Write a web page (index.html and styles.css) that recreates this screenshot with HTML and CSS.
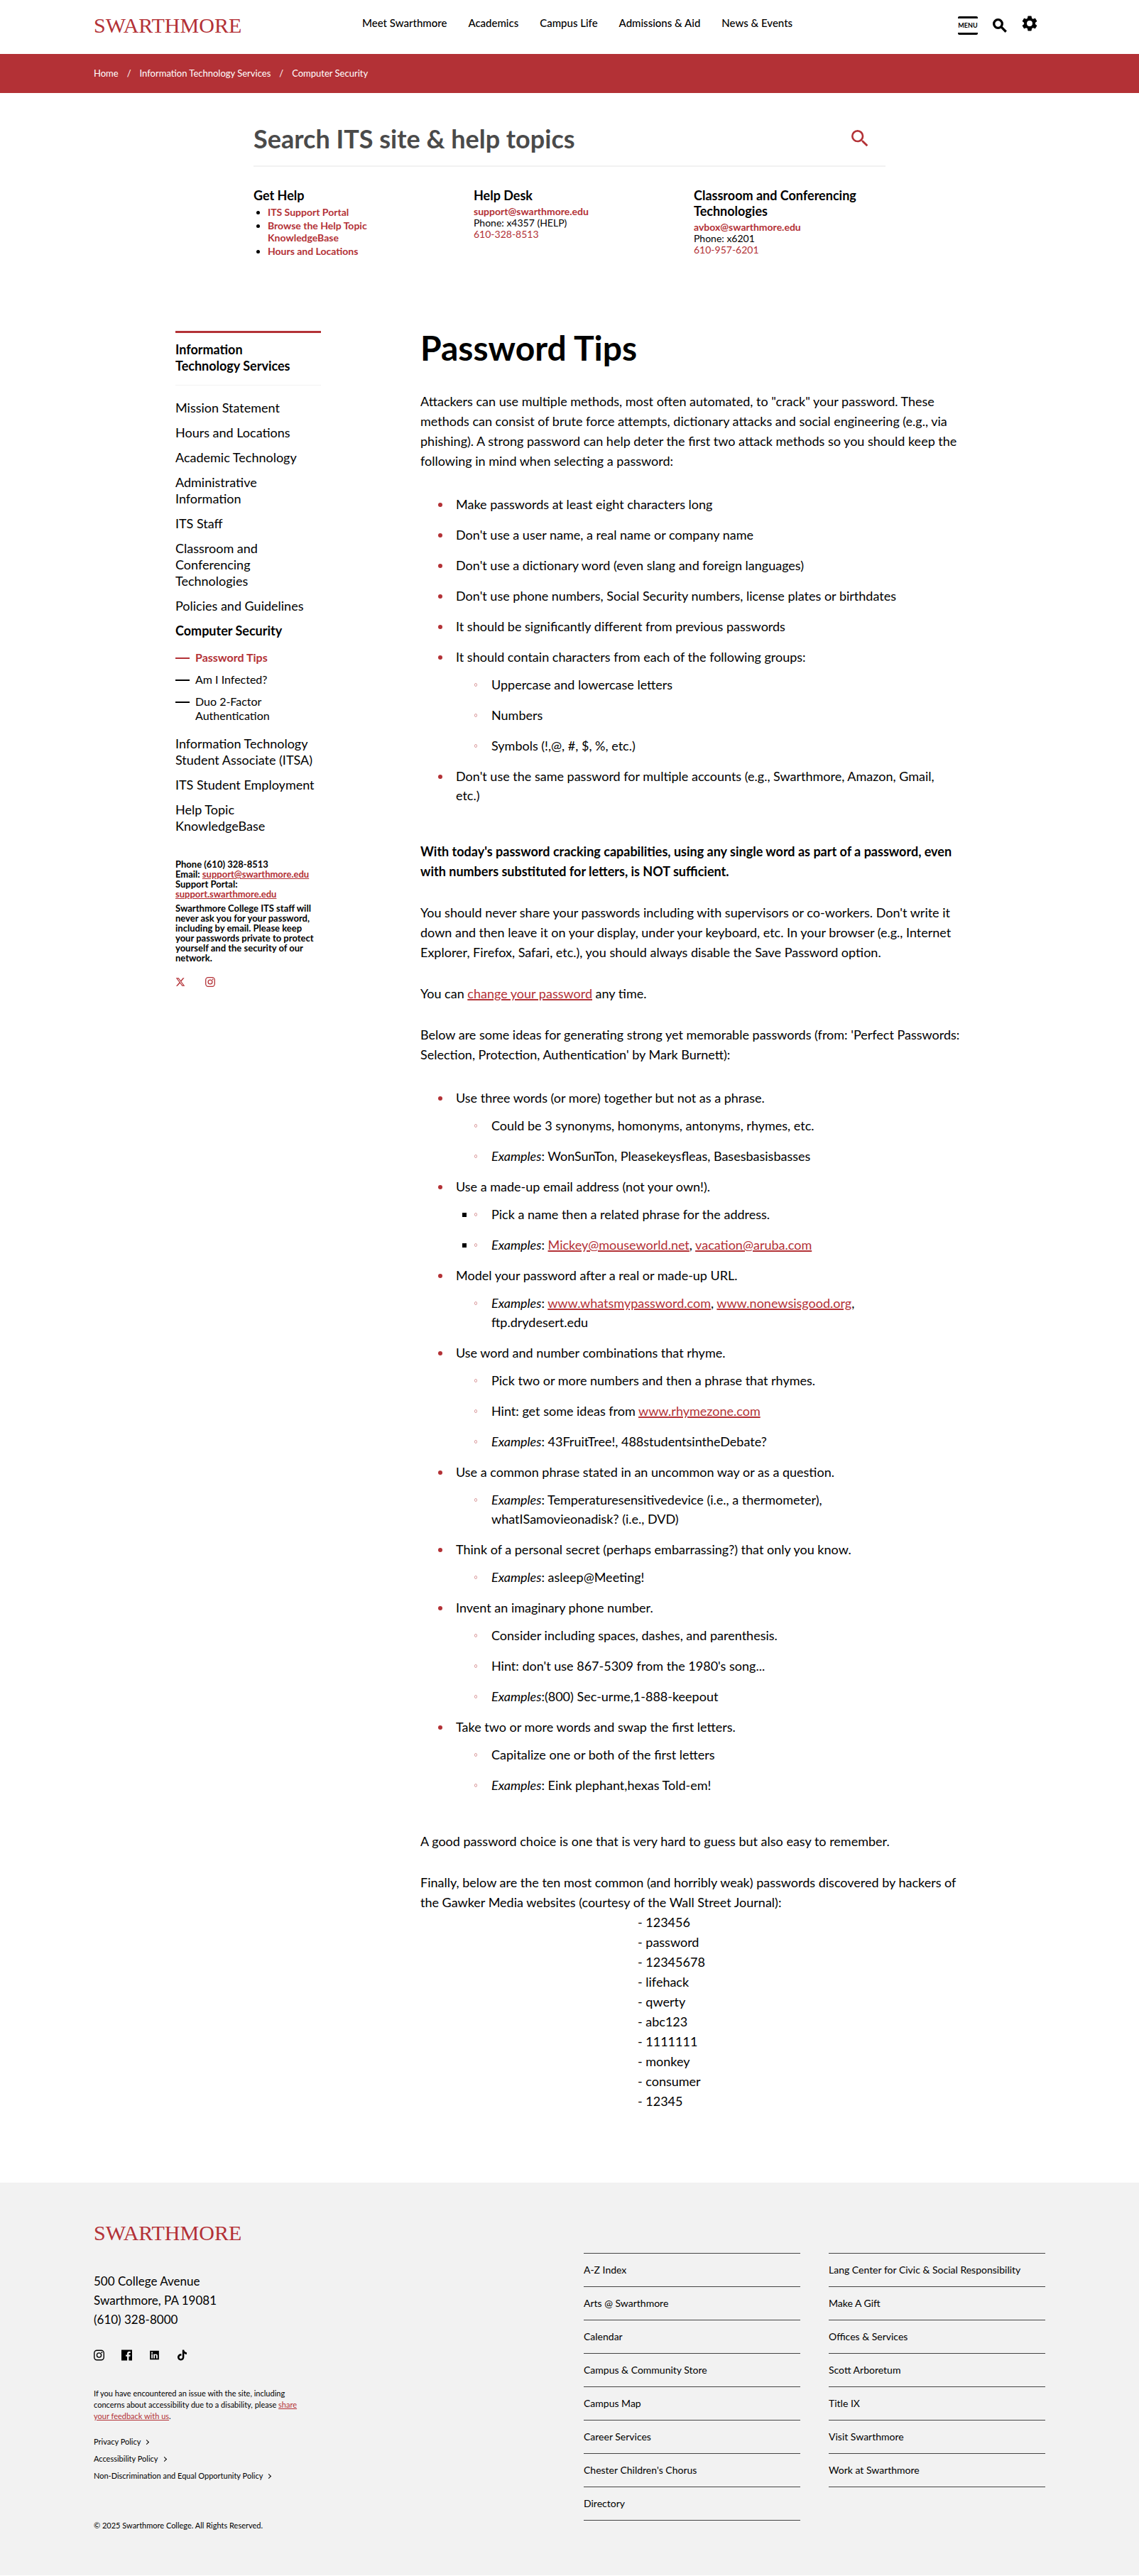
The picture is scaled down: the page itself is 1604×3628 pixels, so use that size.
FILE: index.html
```html
<!DOCTYPE html>
<html lang="en">
<head>
<meta charset="utf-8">
<meta name="viewport" content="width=device-width, initial-scale=1">
<title>Password Tips :: Information Technology Services :: Swarthmore College</title>
<link rel="stylesheet" href="styles.css">
</head>
<body>
<svg class="sprite" aria-hidden="true">
  <symbol id="icon-search" viewBox="0 0 18 18"><path d="M12.5 11h-.79l-.28-.27A6.47 6.47 0 0 0 13 6.5 6.5 6.5 0 1 0 6.5 13c1.61 0 3.09-.59 4.23-1.57l.27.28v.79l5 4.99L17.49 16l-4.99-5zm-6 0C4.01 11 2 8.99 2 6.5S4.01 2 6.5 2 11 4.01 11 6.5 8.99 11 6.5 11z"/></symbol>
  <symbol id="icon-instagram" viewBox="0 0 24 24"><rect x="1.2" y="1.2" width="21.6" height="21.6" rx="6" fill="none" stroke="currentColor" stroke-width="2.2"/><circle cx="12" cy="12" r="5" fill="none" stroke="currentColor" stroke-width="2.2"/><circle cx="18.2" cy="5.8" r="1.5"/></symbol>
</svg>

<header class="site-header wrap">
  <a class="logo" href="#">SWARTHMORE</a>
  <nav class="main-nav" aria-label="Main">
    <a href="#">Meet Swarthmore</a>
    <a href="#">Academics</a>
    <a href="#">Campus Life</a>
    <a href="#">Admissions &amp; Aid</a>
    <a href="#">News &amp; Events</a>
  </nav>
  <div class="tools">
    <button class="menu-button" type="button">MENU</button>
    <button class="icon-button" type="button" aria-label="Search"><svg class="icon-find" viewBox="0 0 24 24"><circle cx="9" cy="9" r="7"/><path d="M14 14l8.500 8.500"/></svg></button>
    <button class="icon-button gear" type="button" aria-label="Settings"><svg viewBox="2 2 20 20"><path d="M19.140 12.940c.040-.3.060-.610.060-.940 0-.320-.020-.640-.070-.940l2.030-1.580a.490.490 0 0 0 .120-.610l-1.920-3.320a.488.488 0 0 0-.590-.220l-2.390.960c-.5-.380-1.030-.7-1.620-.940l-.360-2.540a.484.484 0 0 0-.480-.410h-3.840c-.240 0-.430.170-.470.410l-.360 2.540c-.590.240-1.130.570-1.620.940l-2.390-.960c-.220-.080-.470 0-.590.220L2.740 8.870c-.120.210-.080.470.120.610l2.030 1.580c-.050.3-.090.630-.090.940s.020.640.070.940l-2.030 1.580a.490.490 0 0 0-.120.610l1.920 3.320c.120.220.370.290.590.220l2.390-.960c.5.380 1.030.7 1.620.940l.360 2.540c.050.240.240.410.480.410h3.840c.240 0 .440-.170.470-.410l.360-2.540c.590-.240 1.130-.560 1.620-.940l2.390.960c.220.080.470 0 .590-.220l1.920-3.320c.120-.220.070-.470-.120-.610l-2.010-1.580zM12 15.600A3.600 3.600 0 1 1 12 8.400a3.600 3.600 0 0 1 0 7.200z"/></svg></button>
  </div>
</header>

<nav class="breadcrumb-bar" aria-label="Breadcrumb">
  <ol class="breadcrumb wrap">
    <li><a href="#">Home</a></li>
    <li><a href="#">Information Technology Services</a></li>
    <li><a href="#">Computer Security</a></li>
  </ol>
</nav>

<section class="help">
  <form class="search" action="#" role="search">
    <input type="search" aria-label="Search ITS site and help topics" placeholder="Search ITS site &amp; help topics">
    <button class="icon-button" type="submit" aria-label="Submit search"><svg><use href="#icon-search"/></svg></button>
  </form>
  <div class="help-columns">
    <div>
      <h2>Get Help</h2>
      <ul class="help-links">
        <li><a href="#">ITS Support Portal</a></li>
        <li><a href="#">Browse the Help Topic KnowledgeBase</a></li>
        <li><a href="#">Hours and Locations</a></li>
      </ul>
    </div>
    <div>
      <h2>Help Desk</h2>
      <p><a class="strong" href="#">support@swarthmore.edu</a><br>Phone: x4357 (HELP)<br><a href="#">610-328-8513</a></p>
    </div>
    <div>
      <h2>Classroom and Conferencing Technologies</h2>
      <p><a class="strong" href="#">avbox@swarthmore.edu</a><br>Phone: x6201<br><a href="#">610-957-6201</a></p>
    </div>
  </div>
</section>

<div class="content">
  <aside class="sidebar">
    <h2 class="section-title"><a href="#">Information Technology Services</a></h2>
    <ul class="section-nav">
      <li><a href="#">Mission Statement</a></li>
      <li><a href="#">Hours and Locations</a></li>
      <li><a href="#">Academic Technology</a></li>
      <li><a href="#">Administrative Information</a></li>
      <li><a href="#">ITS Staff</a></li>
      <li><a href="#">Classroom and Conferencing Technologies</a></li>
      <li><a href="#">Policies and Guidelines</a></li>
      <li><a class="open" href="#">Computer Security</a>
        <ul class="sub-nav">
          <li class="current"><a href="#">Password Tips</a></li>
          <li><a href="#">Am I Infected?</a></li>
          <li><a href="#">Duo 2-Factor Authentication</a></li>
        </ul>
      </li>
      <li><a href="#">Information Technology Student Associate (ITSA)</a></li>
      <li><a href="#">ITS Student Employment</a></li>
      <li><a href="#">Help Topic KnowledgeBase</a></li>
    </ul>
    <div class="contact">
      <p>Phone (610) 328-8513<br>Email: <a href="#">support@swarthmore.edu</a><br>Support Portal: <a href="#">support.swarthmore.edu</a></p>
      <p>Swarthmore College ITS staff will never ask you for your password, including by email. Please keep your passwords private to protect yourself and the security of our network.</p>
    </div>
    <div class="side-social">
      <a href="#" aria-label="X"><svg viewBox="0 0 24 24"><path d="M18.244 2.250h3.308l-7.227 8.260 8.502 11.240H16.170l-5.214-6.817L4.990 21.750H1.680l7.730-8.835L1.254 2.250H8.080l4.713 6.231zm-1.161 17.520h1.833L7.084 4.126H5.117z"/></svg></a>
      <a href="#" aria-label="Instagram"><svg><use href="#icon-instagram"/></svg></a>
    </div>
  </aside>

  <main class="article">
    <h1>Password Tips</h1>
    <p>Attackers can use multiple methods, most often automated, to "crack" your password. These methods can consist of brute force attempts, dictionary attacks and social engineering (e.g., via phishing). A strong password can help deter the first two attack methods so you should keep the following in mind when selecting a password:</p>
    <ul class="tips">
      <li>Make passwords at least eight characters long</li>
      <li>Don't use a user name, a real name or company name</li>
      <li>Don't use a dictionary word (even slang and foreign languages)</li>
      <li>Don't use phone numbers, Social Security numbers, license plates or birthdates</li>
      <li>It should be significantly different from previous passwords</li>
      <li>It should contain characters from each of the following groups:
        <ul>
          <li>Uppercase and lowercase letters</li>
          <li>Numbers</li>
          <li>Symbols (!,@, #, $, %, etc.)</li>
        </ul>
      </li>
      <li>Don't use the same password for multiple accounts (e.g., Swarthmore, Amazon, Gmail, etc.)</li>
    </ul>
    <p><strong>With today's password cracking capabilities, using any single word as part of a password, even with numbers substituted for letters, is NOT sufficient.</strong></p>
    <p>You should never share your passwords including with supervisors or co-workers. Don't write it down and then leave it on your display, under your keyboard, etc. In your browser (e.g., Internet Explorer, Firefox, Safari, etc.), you should always disable the Save Password option.</p>
    <p>You can <a href="#">change your password</a> any time.</p>
    <p>Below are some ideas for generating strong yet memorable passwords (from: 'Perfect Passwords: Selection, Protection, Authentication' by Mark Burnett):</p>
    <ul class="tips">
      <li>Use three words (or more) together but not as a phrase.
        <ul>
          <li>Could be 3 synonyms, homonyms, antonyms, rhymes, etc.</li>
          <li><em>Examples</em>: WonSunTon, Pleasekeysfleas, Basesbasisbasses</li>
        </ul>
      </li>
      <li>Use a made-up email address (not your own!).
        <ul class="squares">
          <li>Pick a name then a related phrase for the address.</li>
          <li><em>Examples</em>: <a href="#">Mickey@mouseworld.net</a>, <a href="#">vacation@aruba.com</a></li>
        </ul>
      </li>
      <li>Model your password after a real or made-up URL.
        <ul>
          <li><em>Examples</em>: <a href="#">www.whatsmypassword.com</a>, <a href="#">www.nonewsisgood.org</a>, ftp.drydesert.edu</li>
        </ul>
      </li>
      <li>Use word and number combinations that rhyme.
        <ul>
          <li>Pick two or more numbers and then a phrase that rhymes.</li>
          <li>Hint: get some ideas from <a href="#">www.rhymezone.com</a></li>
          <li><em>Examples</em>: 43FruitTree!, 488studentsintheDebate?</li>
        </ul>
      </li>
      <li>Use a common phrase stated in an uncommon way or as a question.
        <ul>
          <li><em>Examples</em>: Temperaturesensitivedevice (i.e., a thermometer), whatISamovieonadisk? (i.e., DVD)</li>
        </ul>
      </li>
      <li>Think of a personal secret (perhaps embarrassing?) that only you know.
        <ul>
          <li><em>Examples</em>: asleep@Meeting!</li>
        </ul>
      </li>
      <li>Invent an imaginary phone number.
        <ul>
          <li>Consider including spaces, dashes, and parenthesis.</li>
          <li>Hint: don't use 867-5309 from the 1980's song...</li>
          <li><em>Examples</em>:(800) Sec-urme,1-888-keepout</li>
        </ul>
      </li>
      <li>Take two or more words and swap the first letters.
        <ul>
          <li>Capitalize one or both of the first letters</li>
          <li><em>Examples</em>: Eink plephant,hexas Told-em!</li>
        </ul>
      </li>
    </ul>
    <p>A good password choice is one that is very hard to guess but also easy to remember.</p>
    <p class="lead-in">Finally, below are the ten most common (and horribly weak) passwords discovered by hackers of the Gawker Media websites (courtesy of the Wall Street Journal):</p>
    <ul class="weak">
      <li>- 123456</li>
      <li>- password</li>
      <li>- 12345678</li>
      <li>- lifehack</li>
      <li>- qwerty</li>
      <li>- abc123</li>
      <li>- 1111111</li>
      <li>- monkey</li>
      <li>- consumer</li>
      <li>- 12345</li>
    </ul>
  </main>
</div>

<footer class="site-footer">
  <div class="footer-grid wrap">
    <div class="footer-info">
      <a class="logo" href="#">SWARTHMORE</a>
      <address>500 College Avenue<br>Swarthmore, PA 19081<br>(610) 328-8000</address>
      <div class="social">
        <a href="#" aria-label="Instagram"><svg><use href="#icon-instagram"/></svg></a>
        <a href="#" aria-label="Facebook"><svg viewBox="0 0 24 24"><path fill-rule="evenodd" d="M0 0h24v24h-7.300v-9.200h3.100l.5-3.700h-3.600V8.900c0-1 .4-1.700 1.800-1.700h1.900V3.900c-.4 0-1.500-.2-2.800-.2-2.800 0-4.700 1.700-4.700 4.800v2.600H9.800v3.700h3.100V24H0z"/></svg></a>
        <a href="#" aria-label="LinkedIn"><svg viewBox="-1 -1 26 26"><path fill-rule="evenodd" d="M1 1h22v22H1zM4.500 9.500v10.200h3.200V9.500zM6.100 4.400a1.900 1.900 0 1 0 0 3.800 1.900 1.900 0 0 0 0-3.800zM9.700 9.500v10.200h3.200v-5.300c0-1.400.5-2.300 1.800-2.300s1.700 1 1.700 2.400v5.200h3.200v-5.900c0-2.900-1.300-4.600-3.800-4.600-1.500 0-2.400.7-2.900 1.600V9.500z"/></svg></a>
        <a href="#" aria-label="TikTok"><svg viewBox="0 0 24 24"><path d="M12.525.020c1.310-.020 2.610-.010 3.910-.020.080 1.530.630 3.090 1.750 4.170 1.120 1.110 2.700 1.620 4.240 1.790v4.030c-1.440-.050-2.890-.350-4.200-.970-.570-.260-1.100-.590-1.620-.930-.010 2.920.010 5.840-.020 8.750-.080 1.400-.540 2.790-1.350 3.940-1.310 1.920-3.580 3.170-5.910 3.210-1.430.080-2.860-.310-4.080-1.030-2.020-1.190-3.440-3.370-3.650-5.710-.020-.5-.030-1-.010-1.490.180-1.900 1.120-3.720 2.580-4.960 1.660-1.440 3.980-2.130 6.150-1.720.020 1.480-.040 2.960-.040 4.440-.990-.320-2.150-.230-3.020.370-.630.410-1.110 1.040-1.360 1.750-.210.510-.150 1.070-.140 1.610.240 1.640 1.820 3.020 3.500 2.870 1.120-.010 2.190-.660 2.770-1.610.190-.330.400-.670.410-1.060.1-1.790.060-3.570.070-5.360.010-4.030-.010-8.050.020-12.070z"/></svg></a>
      </div>
      <p class="feedback">If you have encountered an issue with the site, including concerns about accessibility due to a disability, please <a href="#">share your feedback with us</a>.</p>
      <ul class="policies">
        <li><a href="#">Privacy Policy</a></li>
        <li><a href="#">Accessibility Policy</a></li>
        <li><a href="#">Non-Discrimination and Equal Opportunity Policy</a></li>
      </ul>
      <p class="copyright">© 2025 Swarthmore College. All Rights Reserved.</p>
    </div>
    <ul class="footer-links">
      <li><a href="#">A-Z Index</a></li>
      <li><a href="#">Arts @ Swarthmore</a></li>
      <li><a href="#">Calendar</a></li>
      <li><a href="#">Campus &amp; Community Store</a></li>
      <li><a href="#">Campus Map</a></li>
      <li><a href="#">Career Services</a></li>
      <li><a href="#">Chester Children's Chorus</a></li>
      <li><a href="#">Directory</a></li>
    </ul>
    <ul class="footer-links">
      <li><a href="#">Lang Center for Civic &amp; Social Responsibility</a></li>
      <li><a href="#">Make A Gift</a></li>
      <li><a href="#">Offices &amp; Services</a></li>
      <li><a href="#">Scott Arboretum</a></li>
      <li><a href="#">Title IX</a></li>
      <li><a href="#">Visit Swarthmore</a></li>
      <li><a href="#">Work at Swarthmore</a></li>
    </ul>
  </div>
</footer>
</body>
</html>
```
FILE: styles.css
```css
:root {
  --red: #b33136;
  --ink: #000;
  --grey: #f2f2f2;
}

*, *::before, *::after { box-sizing: border-box; }

body {
  margin: 0;
  background: #fff;
  color: var(--ink);
  font-family: "Lato", "Liberation Sans", sans-serif;
  font-size: 18px;
  line-height: 28px;
}

h1, h2, p, ul, ol { margin: 0; padding: 0; }
ul, ol { list-style: none; }
a { color: inherit; text-decoration: none; }
button { padding: 0; border: 0; background: none; color: inherit; font-family: inherit; cursor: pointer; }
svg { display: block; fill: currentColor; }
.sprite { position: absolute; width: 0; height: 0; }

.wrap {
  max-width: 1372px;
  margin: 0 auto;
  padding-left: 16px;
  padding-right: 16px;
}

.logo {
  display: block;
  color: var(--red);
  font-family: "Liberation Serif", serif;
  font-size: 30px;
  line-height: 32px;
}

/* Header */
.site-header {
  display: flex;
  align-items: center;
  padding-top: 20px;
  padding-bottom: 24px;
}
.site-header .logo { flex: 0 0 378px; }
.main-nav {
  display: flex;
  gap: 30px;
  padding-bottom: 8px;
  font-size: 15px;
  font-weight: 500;
  line-height: 20px;
}
.tools {
  display: flex;
  align-items: center;
  gap: 21px;
  margin-left: auto;
  padding-right: 11px;
}
.menu-button {
  width: 28px;
  border-top: 3px solid;
  border-bottom: 3px solid;
  border-radius: 2px;
  font-size: 9px;
  font-weight: 700;
  line-height: 20px;
}
.icon-find {
  width: 20px;
  height: 20px;
  fill: none;
  stroke: currentColor;
  stroke-width: 4px;
}
.gear { padding-bottom: 6px; }
.gear svg { width: 22px; height: 22px; }

.breadcrumb-bar { background: var(--red); color: #fff; }
.breadcrumb {
  display: flex;
  padding-top: 18px;
  padding-bottom: 18px;
  font-size: 13px;
  line-height: 19px;
}
.breadcrumb li + li::before { content: "/"; margin: 0 12px; }

/* Help panel */
.help {
  max-width: 890px;
  margin: 0 auto;
  padding: 40px 0 101px;
}
.search {
  display: flex;
  align-items: center;
  padding: 0 24px 14px 0;
  border-bottom: 2px solid var(--grey);
}
.search input {
  flex: 1;
  height: 48px;
  padding: 0;
  border: 0;
  background: none;
  font: 700 36px/48px "Lato", sans-serif;
  color: #4a4a4a;
}
.search input::placeholder { color: #4a4a4a; opacity: 1; }
.search button { color: var(--red); }
.search svg { width: 24px; height: 24px; }
.help-columns {
  display: grid;
  grid-template-columns: repeat(3, 1fr);
  gap: 40px;
  margin-top: 29px;
  font-size: 14px;
  line-height: 16px;
}
.help h2 { margin-bottom: 4px; font-size: 18px; line-height: 22px; }
.help-columns a { color: var(--red); }
.strong, .help-links a { font-weight: 700; }
.help-links {
  padding: 0 70px 0 20px;
  list-style: disc;
  line-height: 17px;
}
.help-links li { margin-bottom: 2px; }

/* Two-column body */
.content {
  display: grid;
  grid-template-columns: 205px 1fr;
  gap: 140px;
  max-width: 1110px;
  margin: 0 auto;
  padding-bottom: 101px;
}

.sidebar { padding-top: 1px; line-height: 23px; }
.section-title {
  padding: 12px 20px 15px 0;
  border-top: 3px solid var(--red);
  border-bottom: 1px solid var(--grey);
  font-size: 18px;
  line-height: 23px;
}
.section-nav {
  display: grid;
  gap: 12px;
  padding: 20px 8px 0 0;
}
.section-nav .open { font-weight: 700; }
.sub-nav {
  display: grid;
  gap: 11px;
  padding: 16px 0 6px;
  font-size: 16px;
  line-height: 20px;
}
.sub-nav li {
  display: grid;
  grid-template-columns: 20px 1fr;
  gap: 8px;
}
.sub-nav li::before {
  content: "";
  height: 2px;
  margin-top: 10px;
  background: currentColor;
}
.sub-nav .current { color: var(--red); font-weight: 700; }
.contact {
  display: grid;
  gap: 6px;
  margin-top: 35px;
  font-size: 13px;
  font-weight: 700;
  line-height: 14px;
}
.contact a { color: var(--red); text-decoration: underline; }
.side-social {
  display: flex;
  gap: 28px;
  margin-top: 20px;
  color: var(--red);
}
.side-social svg { width: 14px; height: 14px; }

/* Article */
.article { padding-top: 1px; }
.article h1 { margin-bottom: 37px; font-size: 48px; line-height: 48px; }
.article p { margin-bottom: 30px; }
.article a {
  color: var(--red);
  text-decoration: underline;
  text-decoration-thickness: 2px;
}
.article .lead-in { margin-bottom: 0; }
.tips {
  display: grid;
  gap: 16px;
  margin-bottom: 51px;
  padding: 4px 27px 0 50px;
  line-height: 27px;
}
.tips > li::before {
  content: "";
  display: inline-block;
  width: 6px;
  height: 6px;
  margin: 0 19px 0 -25px;
  border-radius: 50%;
  background: var(--red);
  vertical-align: 3px;
}
.tips ul {
  display: grid;
  gap: 16px;
  padding: 12px 0 0 50px;
}
.tips ul li::before {
  content: "";
  display: inline-block;
  width: 4px;
  height: 5px;
  margin: 0 20px 0 -24px;
  border: 1px solid #dc9fa1;
  border-radius: 2px;
  vertical-align: 4px;
}
.tips .squares { list-style: square; }
.tips .squares li { margin-left: -22px; padding-left: 22px; }
.weak { padding-left: 40%; }

/* Footer */
.site-footer { background: var(--grey); }
.footer-grid {
  display: grid;
  grid-template-columns: 1fr 305px 305px;
  column-gap: 40px;
  padding-top: 55px;
  padding-bottom: 62px;
}
.footer-info { font-size: 11px; line-height: 16px; }
.footer-info address {
  margin-top: 38px;
  font-size: 17px;
  font-style: normal;
  line-height: 27px;
}
.social {
  display: flex;
  gap: 24px;
  margin-top: 29px;
}
.social svg { width: 15px; height: 16px; }
.feedback { max-width: 290px; margin-top: 38px; }
.feedback a { color: var(--red); text-decoration: underline; }
.policies { display: grid; gap: 8px; margin-top: 20px; }
.policies a::after {
  content: "";
  display: inline-block;
  width: 5px;
  height: 5px;
  margin-left: 6px;
  border: solid;
  border-width: 1px 1px 0 0;
  transform: rotate(45deg);
  vertical-align: 1px;
}
.copyright { margin-top: 54px; }
.footer-links {
  margin-top: 44px;
  border-top: 1px solid #444;
  align-self: start;
  font-size: 14px;
  line-height: 46px;
}
.footer-links li { border-bottom: 1px solid #444; }
```
